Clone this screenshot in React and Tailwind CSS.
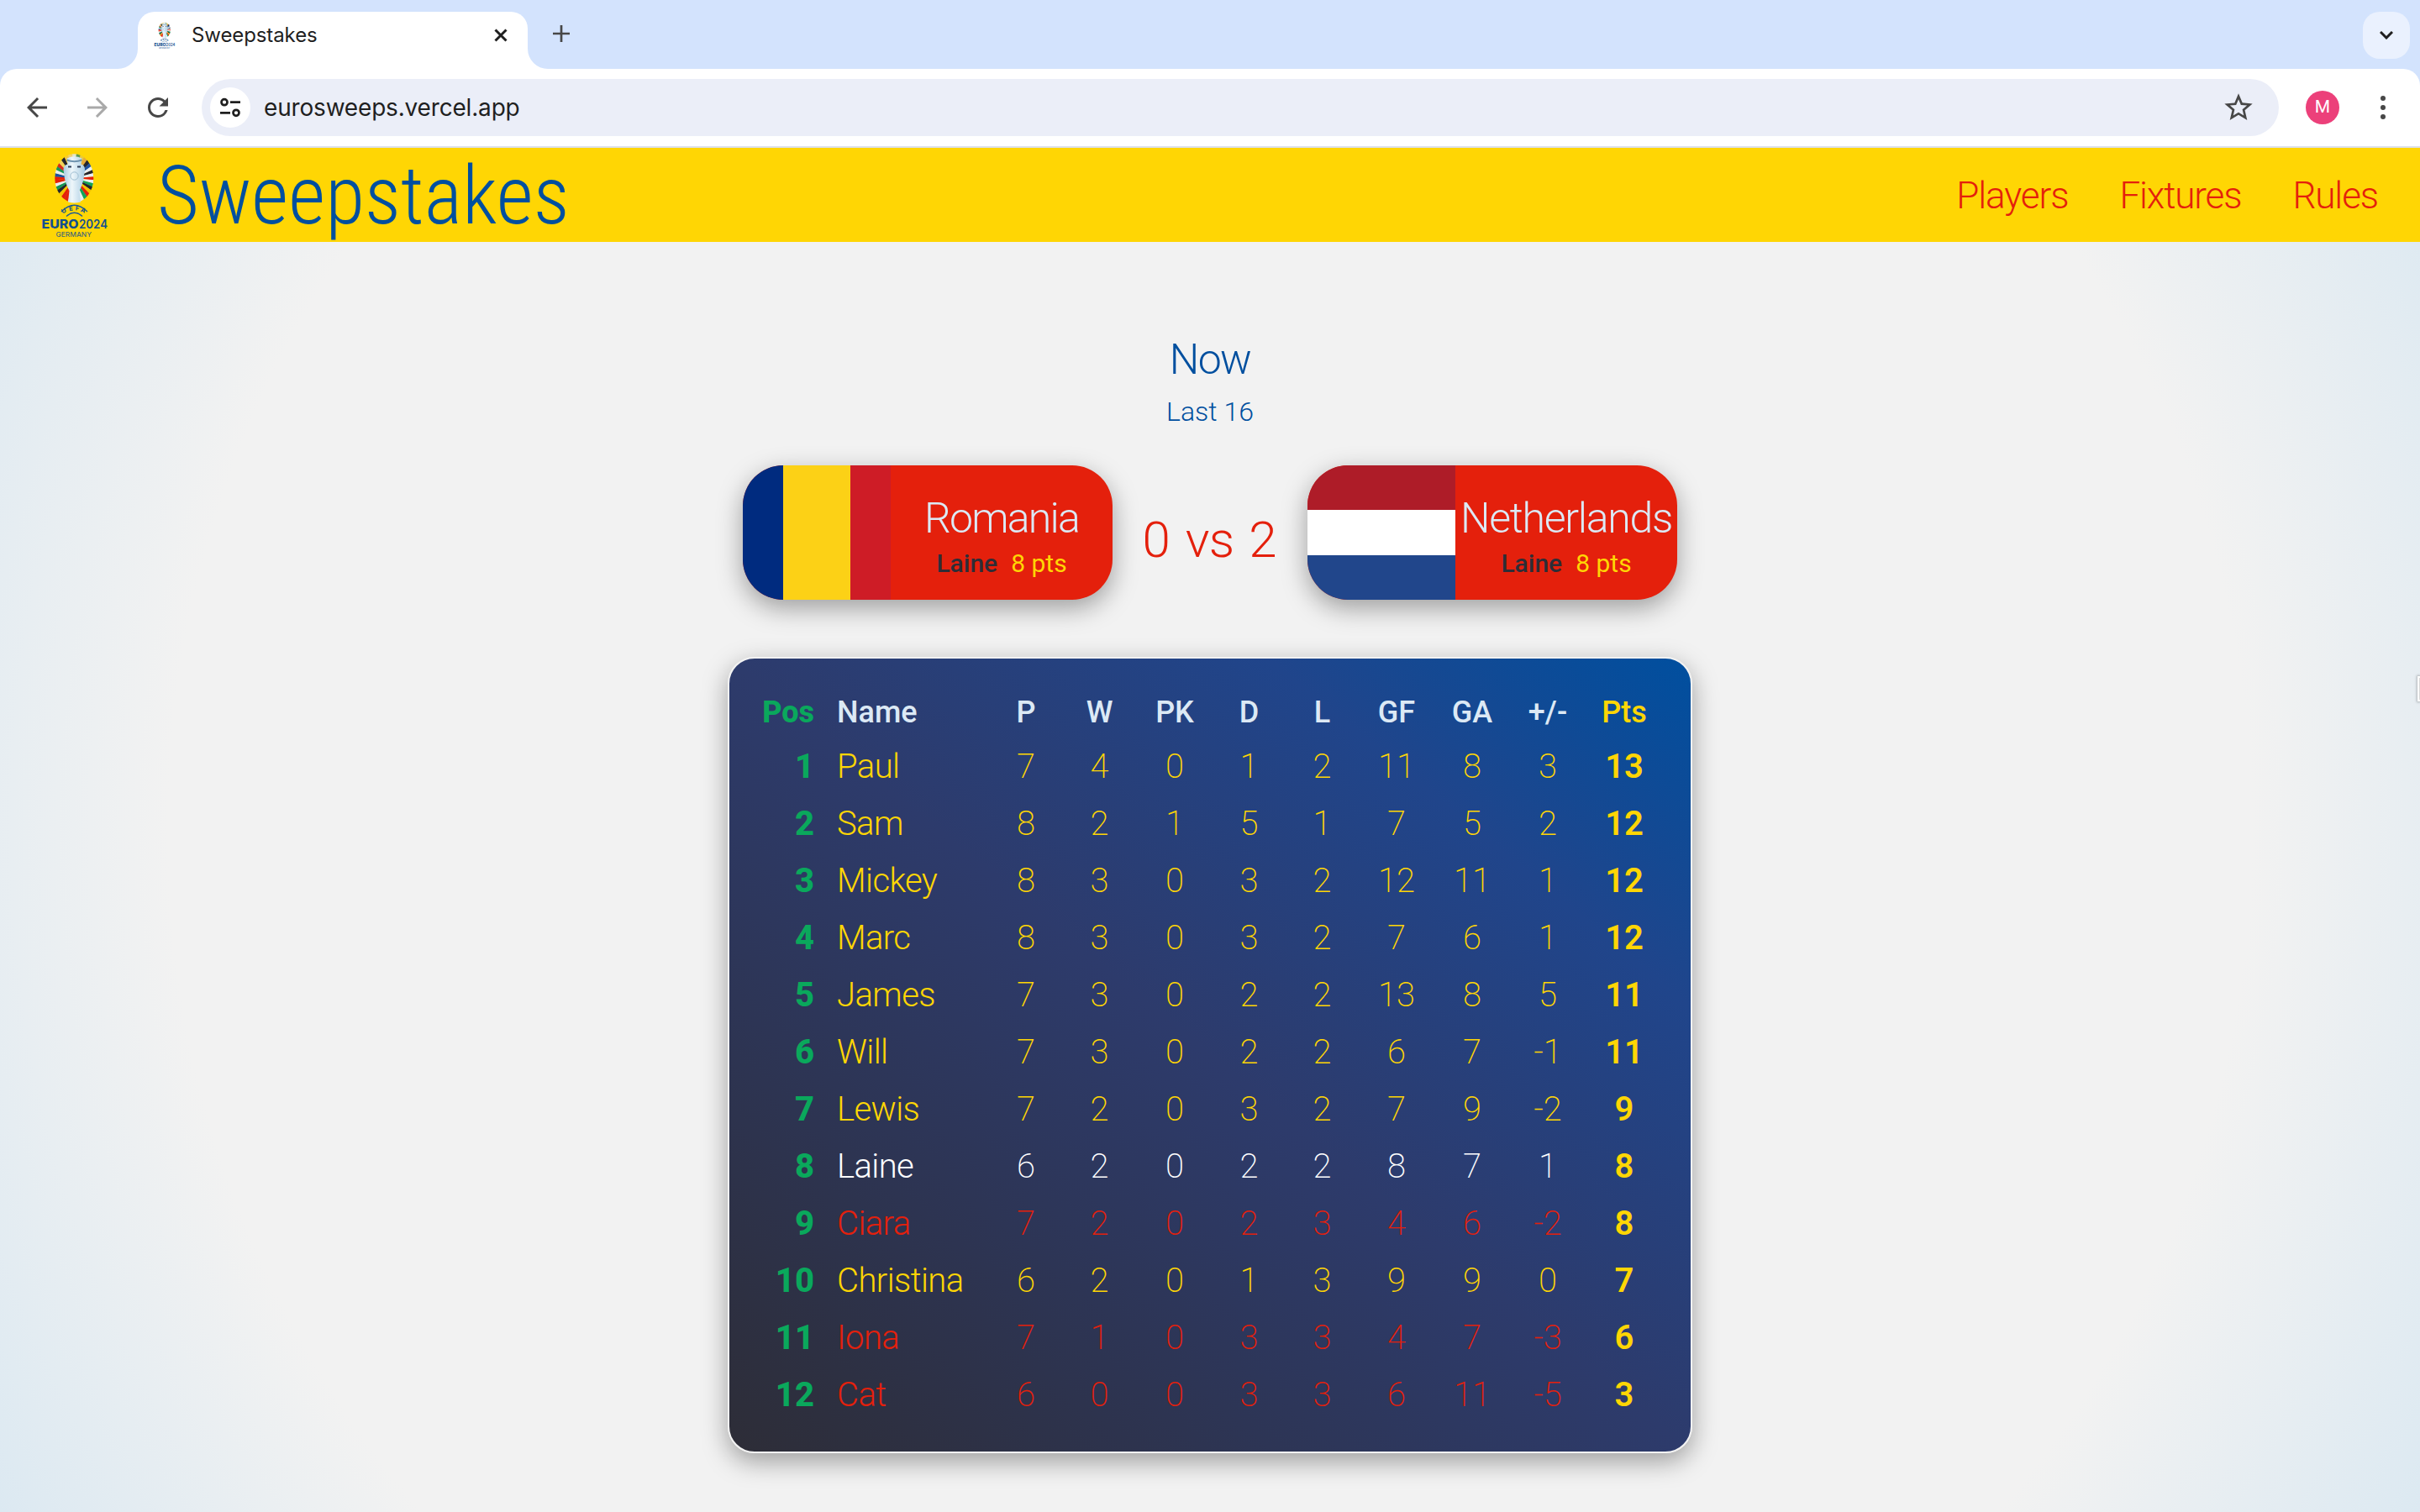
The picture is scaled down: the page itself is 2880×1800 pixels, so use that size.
import React from "react";
import { MdArrowBack, MdArrowForward, MdRefresh, MdStarBorder } from "react-icons/md";

const COLS =
  "grid grid-cols-[102px_208px_86px_89px_90px_87px_87px_90px_90px_90px_92px] items-center text-center";

const HEAD = ["P", "W", "PK", "D", "L", "GF", "GA", "+/-"];

const ROWS = [
  ["Paul", [7, 4, 0, 1, 2, 11, 8, 3], 13, "y"],
  ["Sam", [8, 2, 1, 5, 1, 7, 5, 2], 12, "y"],
  ["Mickey", [8, 3, 0, 3, 2, 12, 11, 1], 12, "y"],
  ["Marc", [8, 3, 0, 3, 2, 7, 6, 1], 12, "y"],
  ["James", [7, 3, 0, 2, 2, 13, 8, 5], 11, "y"],
  ["Will", [7, 3, 0, 2, 2, 6, 7, -1], 11, "y"],
  ["Lewis", [7, 2, 0, 3, 2, 7, 9, -2], 9, "y"],
  ["Laine", [6, 2, 0, 2, 2, 8, 7, 1], 8, "w"],
  ["Ciara", [7, 2, 0, 2, 3, 4, 6, -2], 8, "r"],
  ["Christina", [6, 2, 0, 1, 3, 9, 9, 0], 7, "y"],
  ["Iona", [7, 1, 0, 3, 3, 4, 7, -3], 6, "r"],
  ["Cat", [6, 0, 0, 3, 3, 6, 11, -5], 3, "r"],
];

const TONE = { y: "text-[#ffd604]", w: "text-white", r: "text-[#e4200c]" };

// Wedge colours of the emblem ring, clockwise from the top.
const WEDGES = [
  "#e3e6cf", "#5b9a55", "#e9c93a", "#e4a93c", "#23242e", "#1c4fa0", "#e8eef2", "#23242e",
  "#e8eef2", "#e4200c", "#e8eef2", "#10a45c", "#23242e", "#f3c200", "#e4200c", "#10a45c",
  "#e8eef2", "#dfe9ee", "#c8d6e0", "#e8eef2", "#e4200c", "#e4200c", "#f3c200", "#22242e",
  "#12945a", "#e8eef2", "#e4200c", "#e4200c", "#1c4fa0", "#e8eef2", "#159a5c", "#d62c1e",
  "#f2d15a", "#23242e", "#f3c83c", "#f0d070",
];

function Emblem({ className }) {
  const n = WEDGES.length;
  return (
    <svg className={className} viewBox="46 178 86 108">
      <defs>
        <clipPath id="oval">
          <ellipse cx="88.300" cy="212.200" rx="23" ry="29" />
        </clipPath>
        <linearGradient id="cup" x1="0" x2="1" y1="0" y2="0">
          <stop offset="0" stopColor="#a9cce2" />
          <stop offset=".4" stopColor="#eef6fa" />
          <stop offset="1" stopColor="#aacde3" />
        </linearGradient>
      </defs>
      <g clipPath="url(#oval)">
        {WEDGES.map((c, i) => {
          const a = ((i - 0.5) / n) * Math.PI * 2;
          const b = ((i + 0.55) / n) * Math.PI * 2;
          return (
            <path
              key={i}
              fill={c}
              d={`M88.3 212.2L${88.3 + 60 * Math.sin(a)} ${212.2 - 60 * Math.cos(a)}L${88.3 + 60 * Math.sin(b)} ${212.2 - 60 * Math.cos(b)}Z`}
            />
          );
        })}
      </g>
      <path
        fill="url(#cup)"
        d="M79.500 188.500Q88.500 184 97.500 188.500L96.500 195.500Q101 196.500 101 202L99.500 213Q97.500 222 94.500 227L96 240.500Q88.500 242.500 81 240.500L82.500 227Q79.500 222 77 213L75.500 202Q75.500 196.500 80.500 195.500Z"
      />
      <path d="M79.500 190.500Q88.500 194 97.500 190.500" fill="none" stroke="#6f93ae" strokeWidth="2" />
      <path d="M81 198.500h4M96 198.500h-4" stroke="#30405a" strokeWidth="2" />
      <circle cx="88.500" cy="209.500" r="4.700" fill="none" stroke="#9dbdd2" strokeWidth="1" />
      <path d="M73 252Q88.500 236.500 104 252M79 257.500Q88.500 249 98 257.500" fill="none" stroke="#1d5a93" strokeWidth="1.300" />
      <g fill="#12508f" fontFamily="Inter, sans-serif" fontWeight="700" fontSize="7.500">
        <text transform="translate(74.500 254.500) rotate(-26)">U</text>
        <text transform="translate(82.500 251) rotate(-8)">E</text>
        <text transform="translate(89.500 250.200) rotate(8)">F</text>
        <text transform="translate(95.500 251.500) rotate(26)">A</text>
      </g>
      <g fill="#12508f" fontFamily="Inter, sans-serif">
        <text x="49.500" y="272.200" fontSize="14.500" fontWeight="800" textLength="44" lengthAdjust="spacingAndGlyphs">EURO</text>
        <text x="94" y="272.200" fontSize="14.500" fontWeight="600" textLength="34" lengthAdjust="spacingAndGlyphs">2024</text>
        <text x="66.500" y="282" fontSize="8" fontWeight="500" fillOpacity=".85" textLength="42.500" lengthAdjust="spacingAndGlyphs">GERMANY</text>
      </g>
    </svg>
  );
}

function TabStrip() {
  return (
    <div className="flex h-[82px] bg-[#d3e3fd] pl-[140px] pr-3">
      <div className="flex items-end">
        <svg className="size-6" viewBox="0 0 24 24"><path d="M0 24A24 24 0 0 0 24 0V24Z" fill="#fff" /></svg>
        <div className="flex h-[68px] w-[464px] items-center rounded-t-[20px] bg-white pb-[13px] pl-4 pr-6">
          <Emblem className="h-[34px] w-8" />
          <span className="ml-4 text-[24px] leading-8 tracking-[-0.1px] text-[#1f1f1f]">Sweepstakes</span>
          <svg className="ml-auto h-4 w-4" viewBox="0 0 16 16" fill="none" stroke="#1f1f1f" strokeWidth="3"><path d="M1.500 1.500l13 13M14.500 1.500l-13 13" /></svg>
        </div>
        <svg className="size-6" viewBox="0 0 24 24"><path d="M24 24A24 24 0 0 1 0 0V24Z" fill="#fff" /></svg>
        <svg className="mb-8 ml-[6px] size-5" viewBox="0 0 20 20" fill="none" stroke="#474747" strokeWidth="2.700"><path d="M10 0v20M0 10h20" /></svg>
      </div>
      <div className="ml-auto mt-[14px] flex size-14 items-center justify-center rounded-[20px] bg-[#eaf1fe]">
        <svg className="h-[10px] w-4" viewBox="0 0 16 10" fill="none" stroke="#1f1f1f" strokeWidth="3"><path d="M1 1l7 7l7-7" /></svg>
      </div>
    </div>
  );
}

function Toolbar() {
  return (
    <div className="bg-[#d3e3fd]">
      <div className="flex h-[94px] items-center rounded-t-[20px] border-b-2 border-[#dde0ea] bg-white pl-[26px]">
        <MdArrowBack className="size-9 text-[#474747]" />
        <MdArrowForward className="ml-9 size-9 text-[#a9a9a9]" />
        <MdRefresh className="ml-9 size-9 text-[#474747]" />
        <div className="ml-[34px] flex h-[68px] w-[2472px] items-center rounded-full bg-[#ebeef8] pl-[10px] pr-[28px]">
          <div className="flex size-12 items-center justify-center rounded-full bg-white">
            <svg className="size-6" viewBox="0 0 24 24" fill="none" stroke="#1f1f1f" strokeWidth="2.700">
              <circle cx="5" cy="5.700" r="3.500" />
              <circle cx="19" cy="18.300" r="3.500" />
              <path d="M12 5.700h12M0 18.300h12" />
            </svg>
          </div>
          <span className="ml-4 text-[28px] leading-9 tracking-[-0.18px] text-[#1f1f1f]">eurosweeps.vercel.app</span>
          <MdStarBorder className="ml-auto size-10 text-[#474747]" />
        </div>
        <div className="ml-8 flex size-10 items-center justify-center rounded-full bg-[#ec407a] font-[Roboto,sans-serif] text-[21px] text-white">M</div>
        <div className="ml-[49px] flex flex-col gap-[5px]">
          <div className="size-[6px] rounded-full bg-[#474747]" />
          <div className="size-[6px] rounded-full bg-[#474747]" />
          <div className="size-[6px] rounded-full bg-[#474747]" />
        </div>
      </div>
    </div>
  );
}

function SiteHeader() {
  return (
    <header className="flex h-28 items-center bg-[#ffd604] pl-[46px] pr-[50px] font-light">
      <Emblem className="h-[108px] w-[86px]" />
      <h1 className="ml-[55px] pt-[3px] text-[96px] leading-[109px] text-[#004f9f] font-stretch-condensed">Sweepstakes</h1>
      <nav className="ml-auto flex gap-[61px] pt-[2px] text-[44px] leading-[56px] tracking-[-1.1px] text-[#e4200c]">
        <a>Players</a>
        <a>Fixtures</a>
        <a>Rules</a>
      </nav>
    </header>
  );
}

function TeamCard({ name, tracking, flag }) {
  return (
    <div className="flex h-40 w-[440px] overflow-hidden rounded-[48px] bg-[#e4200c] shadow-[0_10px_30px_rgba(0,0,0,0.35)]">
      {flag}
      <div className="flex w-[264px] flex-col items-center pt-[35px]">
        <span className={`text-[50px] font-light leading-[56px] text-[#dce9f5] ${tracking}`}>{name}</span>
        <div className="mt-[7px] flex gap-4 text-[30px] font-medium leading-[38px]">
          <span className="text-[#2d2d37]">Laine</span>
          <span className="font-normal text-[#ffd604]">8 pts</span>
        </div>
      </div>
    </div>
  );
}

function Match() {
  return (
    <section className="flex flex-col items-center text-[#004f9f]">
      <h2 className="text-[50px] font-light leading-[60px] tracking-[-1.6px]">Now</h2>
      <p className="mt-3 text-[32px] font-[350] leading-10">Last 16</p>
      <div className="mt-11 flex">
        <TeamCard
          name="Romania"
          tracking="tracking-[-1.8px]"
          flag={
            <div className="flex w-44">
              <div className="w-12 bg-[#002b7f]" />
              <div className="w-20 bg-[#fcd116]" />
              <div className="w-12 bg-[#ce1c26]" />
            </div>
          }
        />
        <div className="flex w-[232px] justify-center gap-[18px] pr-px pt-[54px] text-[60px] font-[340] leading-[70px] text-[#e4200c]">
          <span>0</span>
          <span className="tracking-[-1px]">vs</span>
          <span>2</span>
        </div>
        <TeamCard
          name="Netherlands"
          tracking="tracking-[-1.3px]"
          flag={
            <div className="flex w-44 flex-col">
              <div className="flex-1 bg-[#ae1c28]" />
              <div className="flex-1 bg-white" />
              <div className="flex-1 bg-[#21468b]" />
            </div>
          }
        />
      </div>
    </section>
  );
}

function Standings() {
  return (
    <section className="mt-[68px] h-[948px] w-[1148px] rounded-[32px] border-2 border-[#f2f2f2] bg-[linear-gradient(to_top_right,#2d2d37,#2d3b6c_50%,#20458b_78%,#004f9f)] pt-[34px] shadow-[0_10px_30px_rgba(0,0,0,0.35)]">
      <div className={`${COLS} mb-px h-[60px] text-[36px] font-medium text-[#dce9f5]`}>
        <span className="pr-px text-right font-extrabold text-[#0aa85c]">Pos</span>
        <span className="pl-[26px] text-left">Name</span>
        {HEAD.map((h) => (
          <span key={h}>{h}</span>
        ))}
        <span className="text-[#ffd604]">Pts</span>
      </div>
      {ROWS.map(([name, stats, pts, tone], i) => (
        <div key={name} className={`${COLS} h-[68px] text-[40px] leading-[68px] ${TONE[tone]}`}>
          <span className="pr-px text-right font-extrabold text-[#0aa85c]">{i + 1}</span>
          <span className="pl-[26px] text-left font-light tracking-[-0.6px]">{name}</span>
          {stats.map((s, k) => (
            <span key={k} className="font-extralight">{s}</span>
          ))}
          <span className="font-semibold text-[#ffd604]">{pts}</span>
        </div>
      ))}
    </section>
  );
}

export default function App() {
  return (
    <div className="relative flex h-[1800px] w-[2880px] flex-col overflow-hidden font-[Inter,sans-serif]">
      <TabStrip />
      <Toolbar />
      <div className="flex flex-1 flex-col bg-[radial-gradient(circle,#f2f2f2_75%,#dce9f2_100%)] font-[Roboto,sans-serif]">
        <SiteHeader />
        <main className="flex flex-col items-center pt-[110px]">
          <Match />
          <Standings />
        </main>
      </div>
      <div className="absolute right-0 top-[805px] h-[30px] w-[3px] border-2 border-r-0 border-white bg-[#d9d9d9] shadow-[0_0_3px_1px_rgba(0,0,0,0.25)]" />
    </div>
  );
}
